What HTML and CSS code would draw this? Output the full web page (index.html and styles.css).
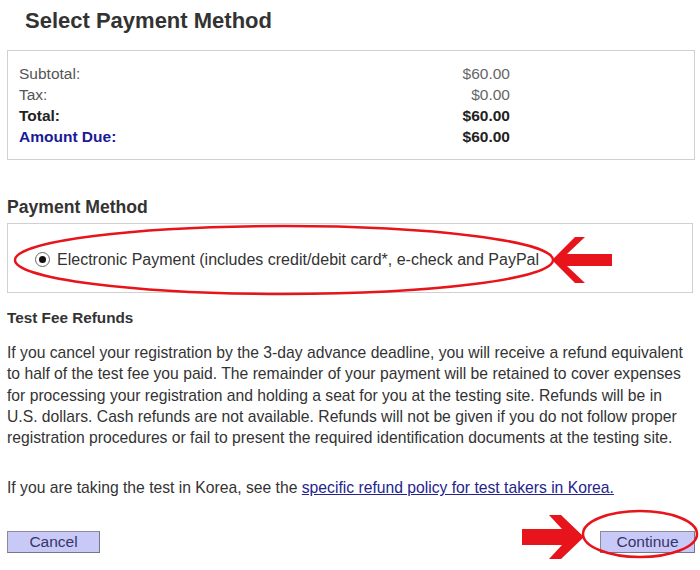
FILE: index.html
```html
<!DOCTYPE html>
<html lang="en">
  <head>
    <title>Select Payment Method</title>
    <meta charset="utf-8" />
    <meta name="viewport" content="width=device-width, initial-scale=1" />

    <link rel="stylesheet" href="styles.css">
  </head>

  <body>
    <div class="page">
      <h1 class="title">Select Payment Method</h1>

      <div class="summary">
        <div class="summary-grid">
          <span class="label">Subtotal:</span><span class="amount">$60.00</span>
          <span class="label">Tax:</span><span class="amount">$0.00</span>
          <span class="label total">Total:</span><span class="amount total">$60.00</span>
          <span class="label due">Amount Due:</span><span class="amount total">$60.00</span>
        </div>
      </div>

      <h2 class="section-title">Payment Method</h2>

      <div class="method">
        <label class="option">
          <span class="radio"><span class="dot"></span></span>
          Electronic Payment (includes credit/debit card*, e-check and PayPal
        </label>
      </div>

      <h3 class="sub-title">Test Fee Refunds</h3>

      <p class="text">
        If you cancel your registration by the 3-day advance deadline, you will receive a refund equivalent
        to half of the test fee you paid. The remainder of your payment will be retained to cover expenses
        for processing your registration and holding a seat for you at the testing site. Refunds will be in
        U.S. dollars. Cash refunds are not available. Refunds will not be given if you do not follow proper
        registration procedures or fail to present the required identification documents at the testing site.
      </p>

      <p class="text text-korea">
        If you are taking the test in Korea, see the
        <a href="#" class="link">specific refund policy for test takers in Korea.</a>
      </p>

      <div class="actions">
        <button class="btn">Cancel</button>
        <button class="btn btn-continue">Continue</button>
      </div>

      <!-- red annotation marks drawn over the page -->
      <svg class="marks" width="700" height="570" viewBox="0 0 700 570">
        <ellipse cx="284" cy="260" rx="269" ry="34" fill="none" stroke="#e8141b" stroke-width="2.5" />
        <polygon points="552,260 575,237 585,237 567,254 612,254 612,266 567,266 585,283 575,283" fill="#e8141b" />
        <ellipse cx="640" cy="534" rx="57" ry="23" fill="none" stroke="#e8141b" stroke-width="2.5" />
        <polygon points="522,529 562,529 549,515 561,515 584,537 561,559 549,559 562,545 522,545" fill="#e8141b" />
      </svg>
    </div>
  </body>
</html>
```

FILE: styles.css
```css
body {
  margin: 0;
  font-family: "Liberation Sans", Arial, sans-serif;
  color: #333;
  background: #fff;
}

.page {
  position: relative;
  width: 700px;
  height: 570px;
  overflow: hidden;
}

.title {
  margin: 0;
  padding: 8px 0 0 25px;
  height: 50px;
  box-sizing: border-box;
  font-size: 22px;
  line-height: 25px;
  font-weight: bold;
  color: #333;
}

.summary {
  margin: 0 5px 0 7px;
  height: 110px;
  box-sizing: border-box;
  border: 1px solid #d0d0d0;
  padding: 12px 0 0 11px;
}

.summary-grid {
  display: grid;
  grid-template-columns: 1fr auto;
  width: 491px;
  font-size: 15.5px;
  line-height: 21px;
}

.label {
  color: #555;
}

.amount {
  text-align: right;
  color: #666;
}

.total {
  font-weight: bold;
  color: #222;
}

.due {
  font-weight: bold;
  color: #1a1a96;
}

.section-title {
  margin: 37px 0 0 7px;
  height: 26px;
  font-size: 17.6px;
  line-height: 20px;
  font-weight: bold;
  color: #333;
}

.method {
  margin: 0 7px 0 7px;
  height: 70px;
  box-sizing: border-box;
  border: 1px solid #d0d0d0;
  display: flex;
  align-items: center;
  padding: 3px 0 0 27px;
}

.option {
  display: flex;
  align-items: center;
  gap: 7px;
  font-size: 16px;
  color: #333;
}

.radio {
  display: flex;
  align-items: center;
  justify-content: center;
  width: 15px;
  height: 15px;
  box-sizing: border-box;
  border: 1.5px solid #666;
  border-radius: 50%;
}

.dot {
  width: 7px;
  height: 7px;
  border-radius: 50%;
  background: #111;
}

.sub-title {
  margin: 16px 0 0 7px;
  font-size: 15.3px;
  line-height: 18px;
  font-weight: bold;
  color: #333;
}

.text {
  margin: 15px 6px 0 7px;
  font-size: 15.7px;
  line-height: 21.3px;
  color: #333;
}

.text-korea {
  margin-top: 28.6px;
}

.link {
  color: #24248c;
  text-decoration: underline;
}

.actions {
  display: flex;
  justify-content: space-between;
  margin: 33px 5px 0 7px;
}

.btn {
  width: 93px;
  height: 22px;
  padding: 0;
  font-family: "Liberation Sans", Arial, sans-serif;
  font-size: 15.5px;
  line-height: 20px;
  color: #35356a;
  background: #c9c9f7;
  border: 1px solid #8a8a9a;
  border-right-color: #77778a;
  border-bottom-color: #77778a;
}

.btn-continue {
  width: 95px;
}

.marks {
  position: absolute;
  top: 0;
  left: 0;
  pointer-events: none;
}
```
